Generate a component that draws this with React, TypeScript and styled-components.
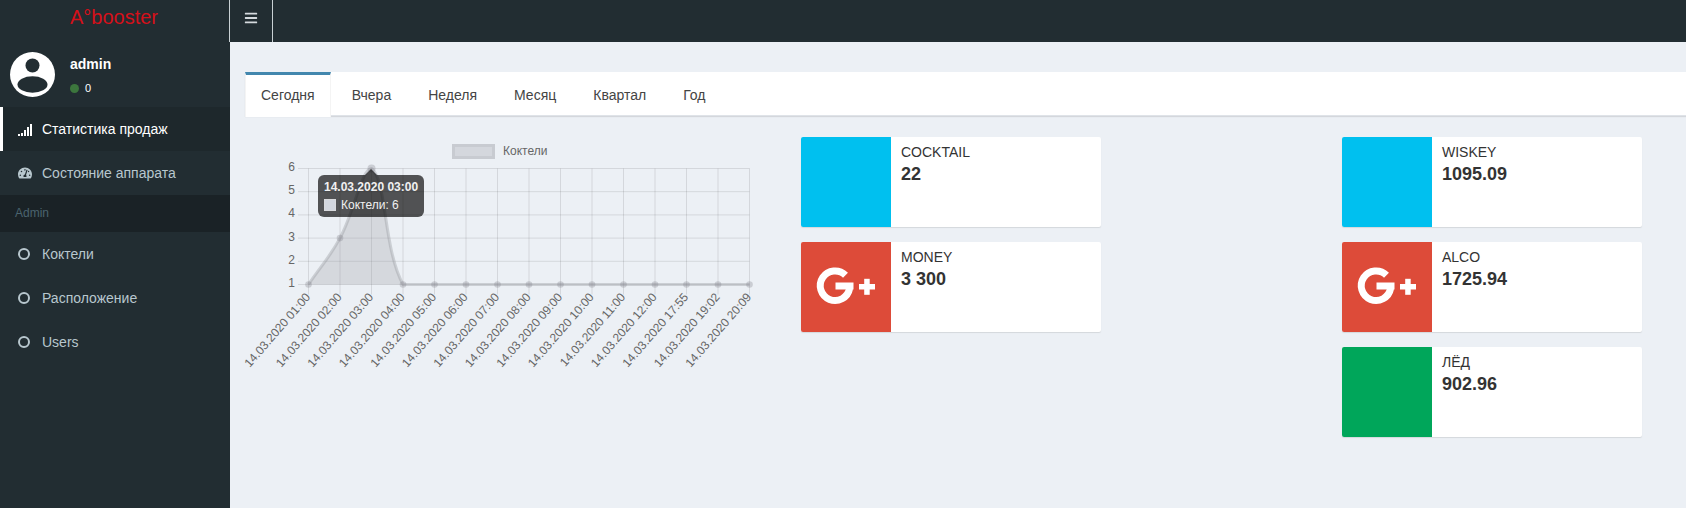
import React from "react";
import styled, { createGlobalStyle } from "styled-components";
import { FaBars, FaTachometerAlt } from "react-icons/fa";

const Global = createGlobalStyle`
  html, body { margin: 0; padding: 0; height: 100%; }
  body { font-family: "Liberation Sans", Arial, sans-serif; font-size: 14px; color: #333; background: #ecf0f5; overflow: hidden; }
  * { box-sizing: border-box; }
`;

const Page = styled.div`
  display: grid;
  grid-template-columns: 230px 1fr;
  grid-template-rows: 42px 1fr;
  width: 1686px;
  height: 508px;
`;
const Logo = styled.div`
  background: #222d32;
  color: #d5101a;
  font-size: 20px;
  line-height: 34px;
  text-align: center;
  padding-right: 2px;
`;
const TopBar = styled.div`
  background: #222d32;
  display: flex;
`;
const MenuToggle = styled.div`
  width: 44px;
  height: 42px;
  margin-left: -1px;
  border-left: 1px solid #c9d0d4;
  border-right: 1px solid #c9d0d4;
  color: #d5dade;
  display: flex;
  justify-content: center;
  padding-top: 11px;
  font-size: 14px;
`;
const Sidebar = styled.aside`
  background: #222d32;
  display: flex;
  flex-direction: column;
`;
const UserPanel = styled.div`
  height: 65px;
  display: flex;
  padding: 10px;
`;
const AvatarBox = styled.svg`
  width: 45px;
  height: 45px;
  flex: none;
`;
const UserInfo = styled.div`
  margin-left: 15px;
  padding-top: 4px;
`;
const UserName = styled.div`
  color: #fff;
  font-weight: 700;
  font-size: 14px;
  line-height: 17px;
`;
const Status = styled.div`
  display: flex;
  align-items: center;
  gap: 6px;
  margin-top: 8px;
  color: #fff;
  font-size: 11px;
  line-height: 14px;
`;
const Dot = styled.span`
  width: 9px;
  height: 9px;
  border-radius: 50%;
  background: #3c763d;
`;
const MenuItem = styled.div<{ $active?: boolean }>`
  height: 44px;
  display: flex;
  align-items: center;
  padding-left: ${(p) => (p.$active ? "15px" : "18px")};
  border-left: ${(p) => (p.$active ? "3px solid #fff" : "0")};
  background: ${(p) => (p.$active ? "#1e282c" : "transparent")};
  color: ${(p) => (p.$active ? "#fff" : "#b8c7ce")};
  font-size: 14px;
`;
const MenuIcon = styled.span`
  width: 24px;
  display: flex;
  align-items: center;
  font-size: 14px;
`;
const SignalSvg = styled.svg`
  width: 15px;
  height: 13px;
  display: block;
`;
const Ring = styled.span`
  width: 12px;
  height: 12px;
  border: 2.5px solid #b8c7ce;
  border-radius: 50%;
  display: block;
`;
const MenuHeader = styled.div`
  height: 37px;
  background: #1a2226;
  color: #4b646f;
  font-size: 12px;
  padding: 10px 15px;
  line-height: 17px;
`;
const Main = styled.main`
  padding-top: 30px;
  min-width: 0;
`;
const Tabs = styled.div`
  margin-left: 15px;
  background: #fff;
  height: 44px;
  display: flex;
  align-items: flex-start;
  box-shadow: 0 1px 1px rgba(0, 0, 0, 0.1);
  border-bottom: 1px solid #dfe3e8;
`;
const Tab = styled.div<{ $active?: boolean }>`
  height: ${(p) => (p.$active ? "45px" : "43px")};
  padding: 10px 15px;
  margin-right: 5px;
  line-height: 20px;
  color: #444;
  border-top: 3px solid ${(p) => (p.$active ? "#4287ae" : "transparent")};
  border-left: 1px solid ${(p) => (p.$active ? "#f4f4f4" : "transparent")};
  border-right: 1px solid ${(p) => (p.$active ? "#f4f4f4" : "transparent")};
  background: #fff;
  font-size: 14px;
`;
const Columns = styled.div`
  display: grid;
  grid-template-columns: 541px 541px 300px;
  padding-left: 260px;
  margin-left: -230px;
  margin-top: 21px;
`;
const ChartCol = styled.div`
  position: relative;
  height: 240px;
`;
const ChartSvg = styled.svg`
  display: block;
  margin-left: -260px;
  margin-top: -137px;
  width: 1000px;
  height: 400px;
  font-family: "Liberation Sans", Arial, sans-serif;
  font-size: 12px;
  overflow: visible;
`;
const Tooltip = styled.div`
  position: absolute;
  left: 58px;
  top: 38px;
  width: 106px;
  height: 42px;
  background: rgba(0, 0, 0, 0.66);
  color: #f0f0f0;
  border-radius: 6px;
  padding: 6px;
  font-size: 12px;
  line-height: 12px;
  white-space: nowrap;
  &::before {
    content: "";
    position: absolute;
    left: 47px;
    top: -6px;
    border: 6px solid transparent;
    border-top: 0;
    border-bottom-color: rgba(0, 0, 0, 0.66);
  }
`;
const TooltipTitle = styled.div`
  font-weight: 700;
  margin-bottom: 6px;
`;
const TooltipRow = styled.div`
  display: flex;
  align-items: center;
  gap: 5px;
`;
const Swatch = styled.span`
  width: 12px;
  height: 12px;
  background: #d2d6de;
  border: 1px solid #d8d9dc;
`;
const CardStack = styled.div`
  display: flex;
  flex-direction: column;
  gap: 15px;
`;
const Card = styled.div`
  width: 300px;
  height: 90px;
  display: flex;
  background: #fff;
  border-radius: 2px;
  box-shadow: 0 1px 1px rgba(0, 0, 0, 0.1);
  overflow: hidden;
`;
const CardIcon = styled.div<{ $bg: string }>`
  width: 90px;
  flex: none;
  background: ${(p) => p.$bg};
`;
const GPlusSvg = styled.svg`
  display: block;
  width: 90px;
  height: 90px;
`;
const CardBody = styled.div`
  padding: 5px 10px;
`;
const CardLabel = styled.div`
  font-size: 14px;
  line-height: 20px;
  text-transform: uppercase;
`;
const CardValue = styled.div`
  font-size: 18px;
  line-height: 24px;
  font-weight: 700;
`;

const LABELS = [
  "01:00","02:00","03:00","04:00","05:00","06:00","07:00","08:00","09:00","10:00","11:00","12:00","17:55","19:02","20:09",
].map((t) => `14.03.2020 ${t}`);
const DATA = [1, 3, 6, 1, 1, 1, 1, 1, 1, 1, 1, 1, 1, 1, 1];
const LEFT = 308.5;
const RIGHT = 749.5;
const TOP = 168.5;
const BOTTOM = 284.5;
const STEP = (RIGHT - LEFT) / 14;
const px = (i: number) => LEFT + i * STEP;
const py = (v: number) => BOTTOM - ((v - 1) / 5) * (BOTTOM - TOP);
const clamp = (n: number, lo: number, hi: number) => Math.min(hi, Math.max(lo, n));

function buildLine() {
  const pts = DATA.map((v, i) => ({ x: px(i), y: py(v) }));
  const t = 0.4;
  const ctrl = pts.map((p, i) => {
    const a = pts[Math.max(i - 1, 0)];
    const b = pts[Math.min(i + 1, pts.length - 1)];
    const d1 = Math.hypot(p.x - a.x, p.y - a.y);
    const d2 = Math.hypot(b.x - p.x, b.y - p.y);
    const s = d1 + d2 || 1;
    return {
      px: p.x - (t * d1 * (b.x - a.x)) / s,
      py: clamp(p.y - (t * d1 * (b.y - a.y)) / s, TOP, BOTTOM),
      nx: p.x + (t * d2 * (b.x - a.x)) / s,
      ny: clamp(p.y + (t * d2 * (b.y - a.y)) / s, TOP, BOTTOM),
    };
  });
  let d = `M${pts[0].x} ${pts[0].y}`;
  for (let i = 1; i < pts.length; i++) {
    d += `C${ctrl[i - 1].nx} ${ctrl[i - 1].ny} ${ctrl[i].px} ${ctrl[i].py} ${pts[i].x} ${pts[i].y}`;
  }
  return { pts, d };
}

const Avatar = () => (
  <AvatarBox viewBox="0 0 45 45">
    <circle cx="22.5" cy="22.5" r="22.5" fill="#fff" />
    <circle cx="22.5" cy="13.5" r="7" fill="#222d32" />
    <ellipse cx="22.5" cy="32.5" rx="15" ry="8.3" fill="#222d32" />
  </AvatarBox>
);

const Signal = () => (
  <SignalSvg viewBox="0 0 15 13">
    {[2, 3, 6, 9, 12].map((h, i) => (
      <rect key={i} x={i * 3} y={13 - h} width="2" height={h} fill="#fff" />
    ))}
  </SignalSvg>
);

const GPlus = () => (
  <GPlusSvg viewBox="0 0 90 90">
    <path d="M44.5 33.2A14.8 14.8 0 1 0 48.6 46.5" fill="none" stroke="#fff" strokeWidth="7" />
    <rect x="34.5" y="40.5" width="18" height="7" fill="#fff" />
    <rect x="58" y="42" width="16" height="5.5" fill="#fff" />
    <rect x="63.2" y="36.8" width="5.5" height="16" fill="#fff" />
  </GPlusSvg>
);

const Chart = () => {
  const { pts, d } = buildLine();
  return (
    <ChartSvg viewBox="0 0 1000 400">
      <rect x="453.5" y="145.5" width="40" height="12" fill="#d4d7dd" stroke="#c8cbd1" strokeWidth="3" />
      <text x="503" y="155" fill="#666">Коктели</text>
      {[1, 2, 3, 4, 5, 6].map((v) => (
        <g key={v}>
          <line x1="298" x2={RIGHT} y1={py(v)} y2={py(v)} stroke="rgba(0,0,0,.1)" />
          <text x="295" y={py(v) + 2.5} textAnchor="end" fill="#666">{v}</text>
        </g>
      ))}
      {LABELS.map((l, i) => (
        <g key={l}>
          <line x1={px(i)} x2={px(i)} y1={TOP} y2={BOTTOM + 10} stroke="rgba(0,0,0,.1)" />
          <text transform={`translate(${px(i) + 2.5} 297.5) rotate(-49)`} textAnchor="end" fill="#666">{l}</text>
        </g>
      ))}
      <path d={`${d}L${RIGHT} ${BOTTOM}L${LEFT} ${BOTTOM}Z`} fill="rgba(153,153,158,.27)" />
      <path d={d} fill="none" stroke="rgba(150,152,158,.38)" strokeWidth="3" />
      {pts.map((p, i) => (
        <circle key={p.x} cx={p.x} cy={p.y} r={i === 2 ? 4 : 3.3} fill="rgba(130,132,140,.32)" />
      ))}
    </ChartSvg>
  );
};

const InfoCard = ({ bg, label, value, icon }: { bg: string; label: string; value: string; icon?: boolean }) => (
  <Card>
    <CardIcon $bg={bg}>{icon && <GPlus />}</CardIcon>
    <CardBody>
      <CardLabel>{label}</CardLabel>
      <CardValue>{value}</CardValue>
    </CardBody>
  </Card>
);

export default function App() {
  return (
    <Page>
      <Global />
      <Logo>A°booster</Logo>
      <TopBar>
        <MenuToggle><FaBars /></MenuToggle>
      </TopBar>
      <Sidebar>
        <UserPanel>
          <Avatar />
          <UserInfo>
            <UserName>admin</UserName>
            <Status><Dot />0</Status>
          </UserInfo>
        </UserPanel>
        <MenuItem $active><MenuIcon><Signal /></MenuIcon>Статистика продаж</MenuItem>
        <MenuItem><MenuIcon><FaTachometerAlt /></MenuIcon>Состояние аппарата</MenuItem>
        <MenuHeader>Admin</MenuHeader>
        <MenuItem><MenuIcon><Ring /></MenuIcon>Коктели</MenuItem>
        <MenuItem><MenuIcon><Ring /></MenuIcon>Расположение</MenuItem>
        <MenuItem><MenuIcon><Ring /></MenuIcon>Users</MenuItem>
      </Sidebar>
      <Main>
        <Tabs>
          <Tab $active>Сегодня</Tab>
          <Tab>Вчера</Tab>
          <Tab>Неделя</Tab>
          <Tab>Месяц</Tab>
          <Tab>Квартал</Tab>
          <Tab>Год</Tab>
        </Tabs>
        <Columns>
          <ChartCol>
            <Chart />
            <Tooltip>
              <TooltipTitle>14.03.2020 03:00</TooltipTitle>
              <TooltipRow><Swatch />Коктели: 6</TooltipRow>
            </Tooltip>
          </ChartCol>
          <CardStack>
            <InfoCard bg="#00c0ef" label="Cocktail" value="22" />
            <InfoCard bg="#dd4b39" label="Money" value="3 300" icon />
          </CardStack>
          <CardStack>
            <InfoCard bg="#00c0ef" label="Wiskey" value="1095.09" />
            <InfoCard bg="#dd4b39" label="Alco" value="1725.94" icon />
            <InfoCard bg="#00a65a" label="Лёд" value="902.96" />
          </CardStack>
        </Columns>
      </Main>
    </Page>
  );
}
